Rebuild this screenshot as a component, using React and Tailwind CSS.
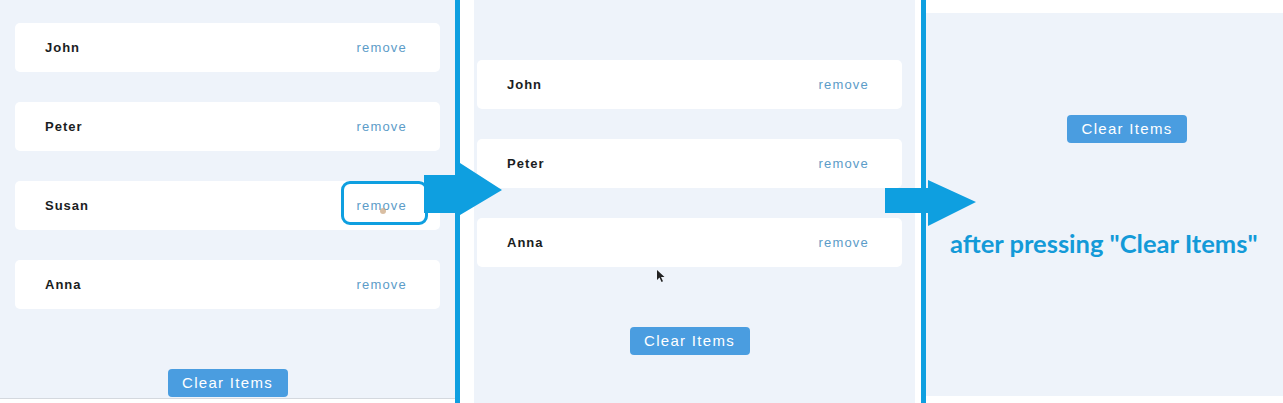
import React from "react";

const people1 = ["John", "Peter", "Susan", "Anna"];
const people2 = ["John", "Peter", "Anna"];

function Card({ name }) {
  return (
    <div className="flex h-[49px] items-center justify-between rounded-[5px] bg-white pl-[30px] pr-[33px]">
      <span className="text-[13px] font-bold tracking-[1px] text-[#1a1d22]">
        {name}
      </span>
      <span className="text-[13px] tracking-[1.2px] text-[#5c9cc8]">remove</span>
    </div>
  );
}

function ClearButton() {
  return (
    <button className="flex h-[28px] w-[120px] items-center justify-center rounded-[4px] bg-[#4a9de0] text-[15px] tracking-[1.3px] text-white">
      Clear Items
    </button>
  );
}

export default function App() {
  return (
    <div
      className="relative flex h-[403px] w-[1283px] overflow-hidden bg-white"
      style={{ fontFamily: '"Liberation Sans", Arial, sans-serif' }}
    >
      {/* panel 1 */}
      <div className="flex h-[399px] w-[455px] flex-col border-b border-[#d4d8de] bg-[#eef3fa] pl-[15px] pr-[15px] pt-[23px]">
        <div className="flex flex-col gap-[30px]">
          {people1.map((p) => (
            <Card key={p} name={p} />
          ))}
        </div>
        <div className="mt-[60px] flex justify-center">
          <ClearButton />
        </div>
      </div>
      <div className="w-[5px] bg-[#0e9fe0]" />

      {/* panel 2 */}
      <div className="w-[14px] bg-white" />
      <div className="flex w-[441px] flex-col bg-[#eef3fa] pl-[3px] pr-[13px] pt-[60px]">
        <div className="flex flex-col gap-[30px]">
          {people2.map((p) => (
            <Card key={p} name={p} />
          ))}
        </div>
        <div className="mt-[60px] flex justify-center">
          <ClearButton />
        </div>
      </div>
      <div className="w-[6px] bg-white" />
      <div className="w-[5px] bg-[#0e9fe0]" />

      {/* panel 3 */}
      <div className="flex flex-1 flex-col bg-white">
        <div className="h-[13px]" />
        <div className="flex h-[383px] flex-col bg-[#eef3fa] pt-[102px]">
          <div className="ml-[141px]">
            <ClearButton />
          </div>
          <div
            className="ml-[24px] mt-[87px] whitespace-nowrap text-[25.5px] font-bold leading-[26px] text-[#139ad8]"
            style={{ fontFamily: "Lato, 'Open Sans', sans-serif" }}
          >
            after pressing "Clear Items"
          </div>
        </div>
      </div>

      {/* annotations */}
      <div className="absolute left-[341px] top-[181px] h-[44px] w-[87px] rounded-[9px] border-[3px] border-[#0e9fe0]" />
      <svg
        className="absolute left-0 top-0"
        width="1283"
        height="403"
        viewBox="0 0 1283 403"
      >
        <polygon
          points="424,175 460,175 460,163 502,190 460,215 460,213 424,213"
          fill="#0e9fe0"
        />
        <polygon
          points="885,188 928,188 928,180 976,202 928,226 928,213 885,213"
          fill="#0e9fe0"
        />
        <path
          d="M657 270 L657 280 L659.5 277.5 L661.5 282 L663 281.3 L661 277 L664.5 277 Z"
          fill="#222"
        />
        <circle cx="383" cy="211" r="3" fill="#c9a27a" opacity="0.7" />
      </svg>
    </div>
  );
}
